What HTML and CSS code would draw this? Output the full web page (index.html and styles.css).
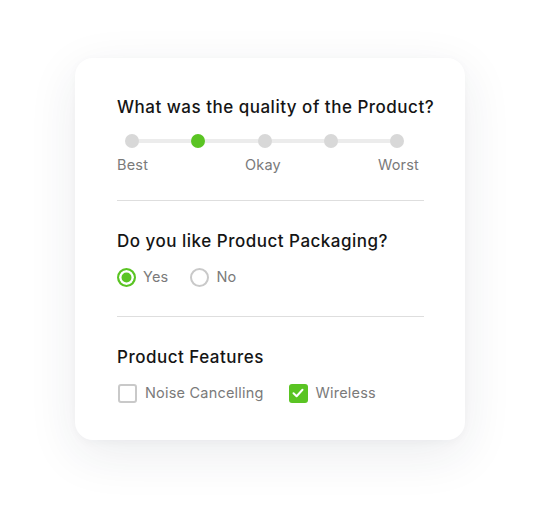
FILE: index.html
```html
<!DOCTYPE html>
<html>
    <head>
        <meta charset="utf-8" />
        <title>Feedback</title>
        <link rel="stylesheet" href="styles.css">
    </head>
    <body>
        <div class="card">
            <div class="section first">
                <h2 class="question">What was the quality of the Product?</h2>
                <div class="scale">
                    <div class="track"></div>
                    <span class="dot"></span>
                    <span class="dot active"></span>
                    <span class="dot"></span>
                    <span class="dot"></span>
                    <span class="dot"></span>
                </div>
                <div class="scale-labels">
                    <span>Best</span>
                    <span>Okay</span>
                    <span>Worst</span>
                </div>
            </div>
            <hr class="divider">
            <div class="section">
                <h2 class="question">Do you like Product Packaging?</h2>
                <div class="options">
                    <label class="option"><span class="radio checked"></span>Yes</label>
                    <label class="option"><span class="radio"></span>No</label>
                </div>
            </div>
            <hr class="divider lower">
            <div class="section">
                <h2 class="question">Product Features</h2>
                <div class="options wide">
                    <label class="option"><span class="check"></span>Noise Cancelling</label>
                    <label class="option"><span class="check checked">
                        <svg width="14" height="14" viewBox="0 0 14 14"><path d="M2.5 7.3 L5.6 10.2 L11.5 3.8" fill="none" stroke="#fff" stroke-width="2" stroke-linecap="round" stroke-linejoin="round"/></svg>
                    </span>Wireless</label>
                </div>
            </div>
        </div>
    </body>
</html>
```
FILE: styles.css
```css
*
{
    box-sizing: border-box;
}

body
{
    margin: 0;
    width: 540px;
    height: 532px;
    background: #ffffff;
    font-family: Inter, "Noto Sans", sans-serif;
    padding: 58px 0 0 75px;
}

.card
{
    width: 390px;
    height: 382px;
    background: #ffffff;
    border-radius: 18px;
    box-shadow: 0 14px 50px rgba(30, 40, 70, 0.09), 0 2px 10px rgba(30, 40, 70, 0.03);
    padding: 0 41px 0 42px;
}

.section
{
    padding-top: 29px;
}

.section.first
{
    padding-top: 38px;
}

.question
{
    margin: 0;
    font-size: 17px;
    font-weight: 500;
    color: #151515;
    line-height: 22px;
    letter-spacing: 0.5px;
    white-space: nowrap;
}

.scale
{
    position: relative;
    display: flex;
    justify-content: space-between;
    align-items: center;
    margin: 15px 20px 0 8px;
    height: 16px;
}

.track
{
    position: absolute;
    left: 4px;
    right: 4px;
    top: 6px;
    height: 4px;
    background: #ececec;
    border-radius: 2px;
}

.dot
{
    position: relative;
    width: 14px;
    height: 14px;
    border-radius: 50%;
    background: #d8d8d8;
}

.dot.active
{
    background: #5ac423;
}

.scale-labels
{
    display: flex;
    justify-content: space-between;
    margin-top: 6px;
    padding-right: 5px;
    font-size: 14.5px;
    color: #7a7a7a;
    line-height: 20px;
    letter-spacing: 0.2px;
}

.divider
{
    margin: 25px 0 0 0;
    border: 0;
    border-top: 1px solid #dedede;
}

.divider.lower
{
    margin-top: 29px;
}

.options
{
    display: flex;
    gap: 22px;
    margin-top: 15px;
}

.options.wide
{
    gap: 24px;
    margin-top: 15px;
}

.option
{
    display: flex;
    align-items: center;
    font-size: 14.5px;
    color: #7a7a7a;
    line-height: 20px;
    letter-spacing: 0.2px;
}

.radio
{
    width: 19px;
    height: 19px;
    border-radius: 50%;
    border: 2px solid #c9c9c9;
    margin-right: 7px;
}

.radio.checked
{
    border-color: #5ac423;
    background: #5ac423;
    box-shadow: inset 0 0 0 2.5px #ffffff;
}

.check
{
    width: 19px;
    height: 19px;
    border-radius: 3px;
    border: 2px solid #c9c9c9;
    margin: 0 8px 0 1px;
    display: flex;
    align-items: center;
    justify-content: center;
}

.check.checked
{
    border: 0;
    background: #5ac423;
}
```
